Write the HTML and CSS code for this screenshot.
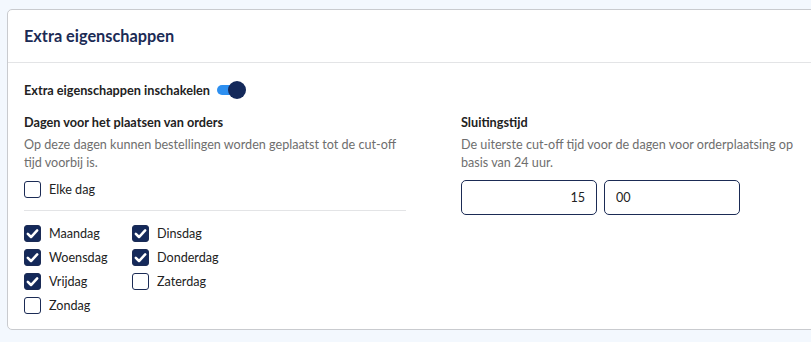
FILE: index.html
```html
<!DOCTYPE html>
<html lang="nl">
<head>
    <meta charset="UTF-8">
    <meta name="viewport" content="width=device-width, initial-scale=1.0">
    <title>Extra eigenschappen</title>
    <link rel="stylesheet" href="styles.css">
</head>
<body>
    <div class="card">
        <div class="card-header">
            <h2>Extra eigenschappen</h2>
        </div>
        <div class="card-body">
            <div class="toggle-row">
                <span class="strong">Extra eigenschappen inschakelen</span>
                <span class="toggle"><span class="knob"></span></span>
            </div>

            <div class="columns">
                <div class="col">
                    <div class="strong">Dagen voor het plaatsen van orders</div>
                    <p class="help">Op deze dagen kunnen bestellingen worden geplaatst tot de cut-off tijd voorbij is.</p>
                    <label class="check"><span class="box"></span>Elke dag</label>
                    <hr class="divider">
                    <div class="days">
                        <label class="check"><span class="box checked"><svg viewBox="0 0 16 16"><path d="M3.6 8.3l3 3 5.8-6.2"/></svg></span>Maandag</label>
                        <label class="check"><span class="box checked"><svg viewBox="0 0 16 16"><path d="M3.6 8.3l3 3 5.8-6.2"/></svg></span>Dinsdag</label>
                        <label class="check"><span class="box checked"><svg viewBox="0 0 16 16"><path d="M3.6 8.3l3 3 5.8-6.2"/></svg></span>Woensdag</label>
                        <label class="check"><span class="box checked"><svg viewBox="0 0 16 16"><path d="M3.6 8.3l3 3 5.8-6.2"/></svg></span>Donderdag</label>
                        <label class="check"><span class="box checked"><svg viewBox="0 0 16 16"><path d="M3.6 8.3l3 3 5.8-6.2"/></svg></span>Vrijdag</label>
                        <label class="check"><span class="box"></span>Zaterdag</label>
                        <label class="check"><span class="box"></span>Zondag</label>
                    </div>
                </div>
                <div class="col">
                    <div class="strong">Sluitingstijd</div>
                    <p class="help">De uiterste cut-off tijd voor de dagen voor orderplaatsing op basis van 24 uur.</p>
                    <div class="time">
                        <input type="text" class="hours" value="15">
                        <input type="text" class="minutes" value="00">
                    </div>
                </div>
            </div>
        </div>
    </div>
</body>
</html>
```

FILE: styles.css
```css
body {
    font-family: Lato, "Open Sans", sans-serif;
    font-size: 12.6px;
    color: #222;
    margin: 0;
    padding: 9px 0 0 7px;
    background-color: #f3f8fe;
    overflow: hidden;
}
.card {
    width: 812px;
    height: 321px;
    background: white;
    border: 1px solid #c9cbcf;
    border-radius: 5px;
    box-sizing: border-box;
}
.card-header {
    height: 53px;
    padding: 0 16px;
    display: flex;
    align-items: center;
    border-bottom: 1px solid #e3e4e6;
    box-sizing: border-box;
}
.card-header h2 {
    margin: 0 0 2px;
    font-size: 16.3px;
    font-weight: 700;
    color: #1b2b55;
}
.card-body {
    padding: 18px 16px 0;
}
.strong {
    font-size: 12.7px;
    font-weight: 700;
    color: #222;
}
.toggle-row {
    display: flex;
    align-items: center;
    gap: 7px;
    height: 18px;
    margin-bottom: 14px;
}
.toggle {
    position: relative;
    width: 22px;
    height: 10px;
    border-radius: 5px;
    background: #2d8ff0;
}
.knob {
    position: absolute;
    right: -7px;
    top: -4px;
    width: 18px;
    height: 18px;
    border-radius: 50%;
    background: #14295a;
}
.columns {
    display: grid;
    grid-template-columns: 382px 1fr;
    gap: 55px;
}
.col .strong {
    line-height: 18px;
}
.help {
    margin: 5px 0 5px;
    color: #6e6e6e;
    line-height: 18px;
}
.check {
    display: flex;
    align-items: center;
    gap: 8px;
    height: 24px;
}
.box {
    width: 17px;
    height: 17px;
    border: 1px solid #1b2b55;
    border-radius: 3px;
    box-sizing: border-box;
    display: flex;
}
.box.checked {
    background: #14295a;
}
.box svg {
    width: 17px;
    height: 17px;
    margin: -1px;
    fill: none;
    stroke: white;
    stroke-width: 2.4;
    stroke-linecap: round;
    stroke-linejoin: round;
}
.divider {
    border: none;
    border-top: 1px solid #e3e4e6;
    margin: 9px 0 10px;
}
.days {
    display: grid;
    grid-template-columns: 108px 1fr;
}
.time {
    display: flex;
    gap: 7px;
    margin-top: 8px;
}
.time input {
    width: 136px;
    height: 35px;
    box-sizing: border-box;
    border: 1px solid #1b2b55;
    border-radius: 5px;
    padding: 0 11px;
    font-family: inherit;
    font-size: 12.6px;
    color: #222;
}
.hours {
    text-align: right;
}
```
